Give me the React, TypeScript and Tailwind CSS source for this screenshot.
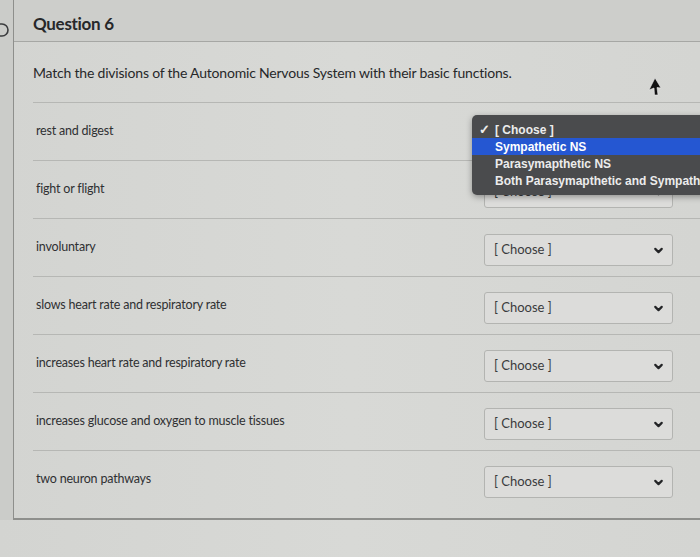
import { ChevronDown } from "lucide-react"

const rows = [
  "rest and digest",
  "fight or flight",
  "involuntary",
  "slows heart rate and respiratory rate",
  "increases heart rate and respiratory rate",
  "increases glucose and oxygen to muscle tissues",
  "two neuron pathways",
]

function ChooseSelect() {
  return (
    <div className="mt-[15px] mr-[27px] flex h-[32px] w-[189px] shrink-0 items-center justify-between rounded-[3px] border border-[#b3b4b1] bg-[#dcdcda] pl-[9px] pr-[7px]">
      <span className="text-[13px] text-[#3a3b3d]">[ Choose ]</span>
      <ChevronDown className="h-[13px] w-[13px] text-[#232426]" strokeWidth={4} />
    </div>
  )
}

export default function App() {
  return (
    <div
      className="relative h-[557px] w-[700px] overflow-hidden bg-[linear-gradient(90deg,#d3d4d1_0%,#d8d9d6_50%,#d4d5d2_100%)] text-[#2d2e30]"
      style={{ fontFamily: "Lato, 'Noto Sans', sans-serif" }}
    >
      <div className="flex">
        {/* left strip */}
        <div className="w-[13px] shrink-0 bg-[#cbccc9] pt-[22px]">
          <svg width="10" height="16" viewBox="0 0 10 16" className="-ml-[1px]">
            <path d="M0 2 L3 2 A6 6 0 0 1 3 14 L0 14" fill="none" stroke="#3b3c3e" strokeWidth="1.6" />
          </svg>
        </div>

        {/* question panel */}
        <div className="flex-1 border-b-2 border-l border-[#8e8f8c] pb-[9px]">
          <div className="flex h-[42px] items-start border-b border-[#a6a7a4] bg-[#cdcecb] pl-[19px] pt-[13px]">
            <span className="text-[17px] font-bold leading-[22px] tracking-[-0.3px] text-[#27282a]">Question 6</span>
          </div>
          <div className="pl-[19px] pt-[21px]">
            <p className="h-[39px] text-[14px] leading-[20px] tracking-[-0.2px] text-[#27282a]">
              Match the divisions of the Autonomic Nervous System with their basic functions.
            </p>
          </div>
          <div className="ml-[19px] border-t border-[#b6b7b4]">
            {rows.map((label, i) => (
              <div
                key={label}
                className={`flex h-[58px] items-start ${i < rows.length - 1 ? "border-b border-[#b6b7b4]" : ""}`}
              >
                <div className="flex-1 pl-[3px] pt-[19px] text-[12.5px] leading-[18px] tracking-[-0.2px] text-[#2f3032]">
                  {label}
                </div>
                <ChooseSelect />
              </div>
            ))}
          </div>
        </div>
      </div>

      {/* open dropdown menu */}
      <div
        className="absolute left-[472px] top-[115px] h-[80px] w-[260px] rounded-[5px] bg-[#4a4b4d] pt-[6px] text-[12px] font-bold text-[#ececec] shadow-[0_2px_6px_rgba(0,0,0,0.35)]"
        style={{ fontFamily: "'Liberation Sans', Arial, sans-serif" }}
      >
        <div className="flex h-[17px] items-center">
          <span className="w-[23px] pl-[7px] text-[13px]">✓</span>
          <span>[ Choose ]</span>
        </div>
        <div className="flex h-[17px] items-center bg-[#2557d2] text-white">
          <span className="w-[23px]" />
          <span>Sympathetic NS</span>
        </div>
        <div className="flex h-[17px] items-center">
          <span className="w-[23px]" />
          <span>Parasymapthetic NS</span>
        </div>
        <div className="flex h-[17px] items-center whitespace-nowrap">
          <span className="w-[23px] shrink-0" />
          <span>Both Parasymapthetic and Sympathetic NS</span>
        </div>
      </div>

      {/* mouse pointer */}
      <svg className="absolute left-[648px] top-[78px]" width="14" height="18" viewBox="0 0 14 18">
        <path d="M7 0 L13 10 L9 9.5 L10 17 L6.5 17 L6 10 L1 12 Z" fill="#111" stroke="#eee" strokeWidth="0.6" />
      </svg>
    </div>
  )
}
